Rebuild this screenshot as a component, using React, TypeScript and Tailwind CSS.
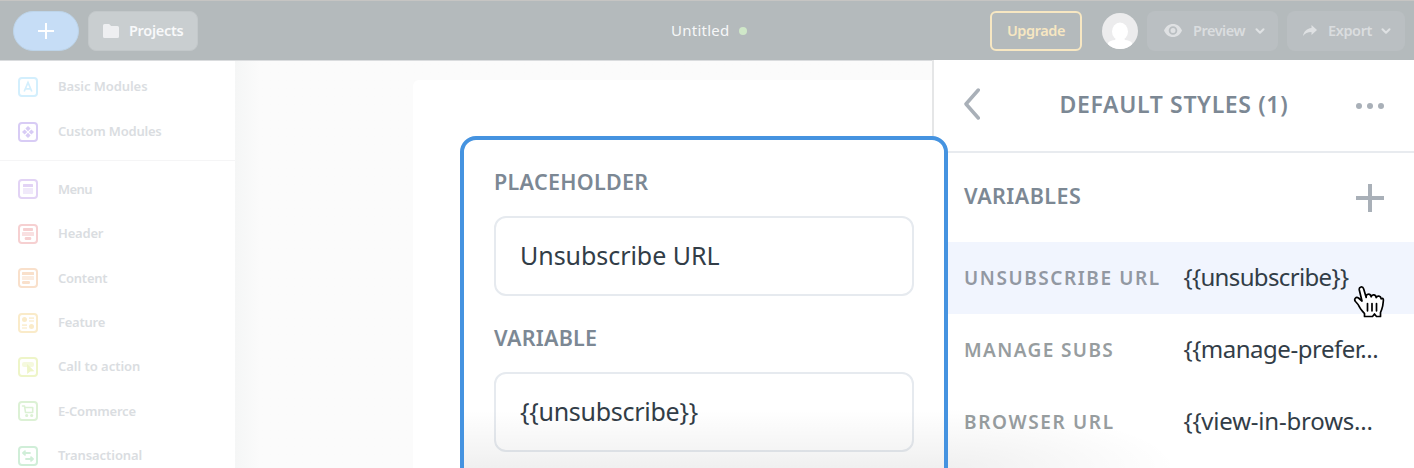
import React from 'react';
import { ChevronDown } from 'lucide-react';

interface ModuleItem {
  label: string;
  color: string;
  tracking: string;
  glyph: React.ReactNode;
}

const baseModules: ModuleItem[] = [
  {
    label: 'Basic Modules',
    color: 'text-[#d3effd]',
    tracking: 'tracking-[-0.07px]',
    glyph: <path d="M6.2 14.5 10 5.5l3.8 9M7.5 11.8h5" stroke="currentColor" strokeWidth="1.7" fill="none" />,
  },
  {
    label: 'Custom Modules',
    color: 'text-[#d8ccf5]',
    tracking: 'tracking-[-0.2px]',
    glyph: (
      <g fill="currentColor">
        <path d="m10 4 2.6 2.6L10 9.2 7.4 6.6zM10 10.8l2.6 2.6L10 16l-2.6-2.6zM6.6 7.4 9.2 10l-2.6 2.6L4 10zM13.4 7.4 16 10l-2.6 2.6-2.6-2.6z" />
      </g>
    ),
  },
];

const sectionModules: ModuleItem[] = [
  {
    label: 'Menu',
    color: 'text-[#e2d3f5]',
    tracking: 'tracking-[-0.6px]',
    glyph: (
      <g fill="currentColor">
        <rect x="5" y="5" width="10" height="3" rx=".5" />
        <rect x="5" y="9" width="10" height="6" rx=".5" opacity=".5" />
      </g>
    ),
  },
  {
    label: 'Header',
    color: 'text-[#f6d0d1]',
    tracking: 'tracking-[-0.2px]',
    glyph: (
      <g fill="currentColor">
        <rect x="5" y="4" width="10" height="3" rx=".8" />
        <rect x="4" y="8" width="12" height="4" rx=".5" opacity=".65" />
        <rect x="6.7" y="13" width="6.6" height="3" rx="1.3" />
      </g>
    ),
  },
  {
    label: 'Content',
    color: 'text-[#f9e0cb]',
    tracking: 'tracking-[-0.25px]',
    glyph: (
      <g fill="currentColor">
        <rect x="4" y="4" width="12" height="3" rx=".5" />
        <rect x="4" y="8" width="12" height="4" rx=".5" opacity=".6" />
        <rect x="4" y="13" width="8" height="3" rx="1.3" />
      </g>
    ),
  },
  {
    label: 'Feature',
    color: 'text-[#faebc9]',
    tracking: 'tracking-[-0.25px]',
    glyph: (
      <g fill="currentColor">
        <circle cx="6.5" cy="6.5" r="2.5" />
        <circle cx="13.5" cy="13.5" r="2.5" />
        <path d="M11 4.3h5v1.6h-5zM11 7.2h5v1.6h-5zM4 11.3h5v1.6H4zM4 14.2h5v1.6H4z" opacity=".8" />
      </g>
    ),
  },
  {
    label: 'Call to action',
    color: 'text-[#eef5c8]',
    tracking: 'tracking-[-0.03px]',
    glyph: (
      <g fill="currentColor">
        <rect x="4" y="5" width="12" height="5" rx="2" opacity=".6" />
        <path d="m9 7 7.5 7.200-4.200.3L9.200 17z" />
      </g>
    ),
  },
  {
    label: 'E-Commerce',
    color: 'text-[#dcf1d5]',
    tracking: 'tracking-[-0.2px]',
    glyph: (
      <g fill="none" stroke="currentColor" strokeWidth="1.6" strokeLinecap="round" strokeLinejoin="round">
        <path d="M4.5 5h2l1 6.500h7.200V6.500H7" />
        <circle cx="8.700" cy="14.500" r=".8" />
        <circle cx="13.700" cy="14.500" r=".8" />
      </g>
    ),
  },
  {
    label: 'Transactional',
    color: 'text-[#d0eed8]',
    tracking: 'tracking-[-0.07px]',
    glyph: (
      <g fill="none" stroke="currentColor" strokeWidth="1.8" strokeLinecap="round" strokeLinejoin="round">
        <path d="M12 7H5l2-1.800M5 7l2 1.800M8 13h7l-2-1.800M15 13l-2 1.800" />
      </g>
    ),
  },
];

const variables = [
  { name: 'UNSUBSCRIBE URL', value: '{{unsubscribe}}', active: true, nameTracking: 'tracking-[1.57px]', valueTracking: 'tracking-[-0.65px]' },
  { name: 'MANAGE SUBS', value: '{{manage-prefer...', active: false, nameTracking: 'tracking-[1.4px]', valueTracking: 'tracking-[-0.48px]' },
  { name: 'BROWSER URL', value: '{{view-in-brows...', active: false, nameTracking: 'tracking-[1.65px]', valueTracking: 'tracking-[-0.2px]' },
];

const ModuleRow: React.FC<{ item: ModuleItem }> = ({ item }) => (
  <div className="flex h-[44.4px] items-center gap-5 pl-[18px]">
    <svg viewBox="0 0 20 20" className={`h-5 w-5 ${item.color}`}>
      <rect x="1" y="1" width="18" height="18" rx="3" fill="none" stroke="currentColor" strokeWidth="2" />
      {item.glyph}
    </svg>
    <span className={`text-[13px] font-semibold whitespace-nowrap text-[#dadde1] ${item.tracking}`}>
      {item.label}
    </span>
  </div>
);

const TopBar = () => (
  <header className="flex h-[61px] shrink-0 items-center border-t border-b border-t-[#c6c5c3] border-b-[#dadcde] bg-[#b4babc] pl-[13px] font-semibold">
    <button className="flex h-10 w-[66px] items-center justify-center rounded-full border border-[#bdd4e9] bg-[#c6ddf6]">
      <svg viewBox="0 0 16 16" className="h-4 w-4" stroke="#fff" strokeWidth="2">
        <path d="M8 0v16M0 8h16" />
      </svg>
    </button>
    <button className="ml-[9px] flex h-10 w-[110px] items-center rounded-lg border border-[#c3c8ca] bg-[#c9ced0] pl-3.5 text-[14.5px] tracking-[-0.3px] text-[#f8f9fa]">
      <svg viewBox="0 0 16 14" className="mr-[10px] h-3.5 w-4" fill="#eeeff1">
        <path d="M1.5 0h4.6l2 2h6.4A1.5 1.5 0 0 1 16 3.5v9a1.5 1.5 0 0 1-1.5 1.5h-13A1.5 1.5 0 0 1 0 12.5v-11A1.5 1.5 0 0 1 1.5 0" />
      </svg>
      Projects
    </button>
    <div className="ml-[473px] flex w-[80px] items-center justify-between font-normal text-[#f6f7f8]">
      <span className="text-[15px] whitespace-nowrap tracking-[0.25px]">Untitled</span>
      <span className="mr-1 h-2 w-2 rounded-full bg-[#cfe7c8]" />
    </div>
    <button className="ml-[239px] h-10 w-[92px] rounded-md border-2 border-[#f7e7c2] text-[14.5px] tracking-[-0.42px] text-[#f7e7c2]">
      Upgrade
    </button>
    <svg viewBox="0 0 36 36" className="ml-[20px] h-9 w-9 shrink-0 rounded-full">
      <rect width="36" height="36" fill="#ececed" />
      <ellipse cx="18" cy="18.5" rx="8" ry="9" fill="#fff" />
      <path d="M14 25h8l1 2c3 .3 6 1.200 7 3V36H6v-6c1-1.800 4-2.700 7-3z" fill="#fff" />
    </svg>
    <button className="ml-[8.500px] flex h-10 w-[131px] shrink-0 items-center rounded-lg bg-[#babfc2] pl-[17px] text-[14.500px] tracking-[-0.5px] text-[#dadddf]">
      <svg viewBox="0 0 18 13" className="mr-[11px] h-[13px] w-[18px]" fill="#dfe1e3">
        <path
          fillRule="evenodd"
          d="M9 0C4.900 0 1.400 2.700 0 6.500 1.400 10.300 4.900 13 9 13s7.600-2.700 9-6.500C16.600 2.700 13.100 0 9 0m0 10.800a4.300 4.300 0 1 1 0-8.600 4.300 4.300 0 0 1 0 8.600M9 4a2.500 2.500 0 1 0 0 5 2.500 2.500 0 0 0 0-5"
        />
      </svg>
      <span className="w-[53px] whitespace-nowrap">Preview</span>
      <ChevronDown size={14} strokeWidth={3.5} className="ml-[7px] text-[#dfe1e3]" />
    </button>
    <button className="ml-[9.500px] flex h-10 w-[118px] shrink-0 items-center rounded-lg bg-[#babfc2] pl-[16px] text-[14.500px] tracking-[-0.400px] text-[#dadddf]">
      <svg viewBox="0 0 14 11" className="mr-[11px] h-[11px] w-[14px]" fill="#dfe1e3">
        <path d="M8.500 0 14 5 8.500 10V7C4.500 7 2 8.300 0 11c.7-4 3.300-7.400 8.500-8z" />
      </svg>
      <span className="w-[44px] whitespace-nowrap">Export</span>
      <ChevronDown size={14} strokeWidth={3.5} className="ml-[7px] text-[#dfe1e3]" />
    </button>
  </header>
);

const Sidebar = () => (
  <aside className="h-full w-[235px] shrink-0 bg-white pt-[4px]">
    <div className="border-b border-[#f5f5f6] pb-[6px]">
      {baseModules.map((item) => (
        <ModuleRow key={item.label} item={item} />
      ))}
    </div>
    <div className="pt-[6.500px]">
      {sectionModules.map((item) => (
        <ModuleRow key={item.label} item={item} />
      ))}
    </div>
  </aside>
);

const StylesPanel = () => (
  <section className="-mt-px h-[408px] w-[482px] shrink-0 border-l-2 border-[#e5e6e7] bg-white">
    <div className="flex h-[93px] items-center justify-between border-b-2 border-[#e8ebef] pr-[30px] pl-[30px]">
      <svg viewBox="0 0 16 32" className="mb-1 h-8 w-4" fill="none" stroke="#a9b0b8" strokeWidth="3.500" strokeLinecap="round" strokeLinejoin="round">
        <path d="M14.300 2 2 16l12.300 14" />
      </svg>
      <h2 className="mb-[2px] ml-[11px] w-[228px] text-[23px] font-semibold tracking-[0.65px] whitespace-nowrap text-[#7c8894]">DEFAULT STYLES (1)</h2>
      <svg viewBox="0 0 28 6" className="h-1.5 w-7" fill="#a9b0b8">
        <circle cx="3" cy="3" r="3" />
        <circle cx="14" cy="3" r="3" />
        <circle cx="25" cy="3" r="3" />
      </svg>
    </div>
    <div className="flex h-[89px] items-center justify-between px-[30px]">
      <h3 className="mb-[2px] text-[21.500px] font-semibold tracking-[0.450px] text-[#7c8894]">VARIABLES</h3>
      <svg viewBox="0 0 28 28" className="h-7 w-7" stroke="#a9b0b8" strokeWidth="4">
        <path d="M14 0v28M0 14h28" />
      </svg>
    </div>
    {variables.map((row) => (
      <div key={row.name} className={`flex h-[72px] items-center pl-[30px] whitespace-nowrap ${row.active ? 'bg-[#f1f5fe]' : ''}`}>
        <span className={`w-[219.500px] text-[19px] font-semibold ${row.nameTracking} ${row.active ? 'text-[#9298a2]' : 'text-[#979d9f]'}`}>
          {row.name}
        </span>
        <span className={`mb-[2px] text-[24px] text-[#323d47] ${row.valueTracking}`}>{row.value}</span>
      </div>
    ))}
  </section>
);

const VariableDialog = () => (
  <div className="absolute top-[136px] left-[460px] h-[360px] w-[488px] rounded-[16px] border-4 border-[#4593e0] bg-white px-[30px] pt-[25px]">
    <label className="block h-[40px] text-[21.500px] leading-[34px] font-semibold tracking-[0.300px] text-[#7c8894]">PLACEHOLDER</label>
    <div className="mt-[11px] flex h-20 items-center rounded-xl border-2 border-[#e6eaef] px-6 text-[25px] tracking-[-0.050px] text-[#323d47]">
      <span>Unsubscribe URL</span>
    </div>
    <label className="mt-[25px] block h-[40px] text-[21.500px] leading-[34px] font-semibold tracking-[0.250px] text-[#7c8894]">VARIABLE</label>
    <div className="mt-[11px] flex h-20 items-center rounded-xl border-2 border-[#e6eaef] px-6 text-[25px] tracking-[-0.270px] text-[#323d47]">
      <span>{'{{unsubscribe}}'}</span>
    </div>
    <div className="absolute inset-x-0 top-[270px] h-[58px] bg-gradient-to-b from-transparent to-black/6" />
  </div>
);

const HandCursor = () => (
  <svg viewBox="0 0 32 34" className="absolute top-[285px] left-[1353px] h-[34px] w-8" fill="#fff" stroke="#000" strokeWidth="1.700" strokeLinejoin="round" strokeLinecap="round">
    <path d="M11.500 31.500v-3c-2-2.500-4-4-5-6.500-1-2-2-3.500-4-5.500-2-2.500.5-5 3-3.500l3.500 3L6.300 5C5.700 1.500 9.700.8 10.700 4l2.500 8.500c-.5-4 4-4.500 5-.7.700-3 4.500-2.500 5 .8 1-2.300 4.500-2 5 1.200 2-1 2.500.5 2 3.200-.2 3-.5 5-1.500 7.500l-1.200 3v4h-4l-2-2.500-2 2.500z" />
    <path d="M14.500 18.500v7.300M19 18.500v7.300M23.500 18.500v7.300" fill="none" />
  </svg>
);

export default function App() {
  return (
    <div className="relative flex h-[468px] w-[1414px] flex-col overflow-hidden bg-white font-['Noto_Sans','Open_Sans',sans-serif]">
      <TopBar />
      <div className="flex min-h-0 flex-1">
        <Sidebar />
        <main className="flex-1 bg-gradient-to-r from-[#f5f6f6] to-[#fbfbfb] to-[25px] pt-[19px] pl-[178px]">
          <div className="h-full rounded-tl-md bg-white" />
        </main>
        <StylesPanel />
      </div>
      <div className="absolute bottom-0 left-[948px] h-[60px] w-[230px] bg-radial-[100%_100%_at_0%_100%] from-black/6 to-transparent" />
      <VariableDialog />
      <HandCursor />
    </div>
  );
}
